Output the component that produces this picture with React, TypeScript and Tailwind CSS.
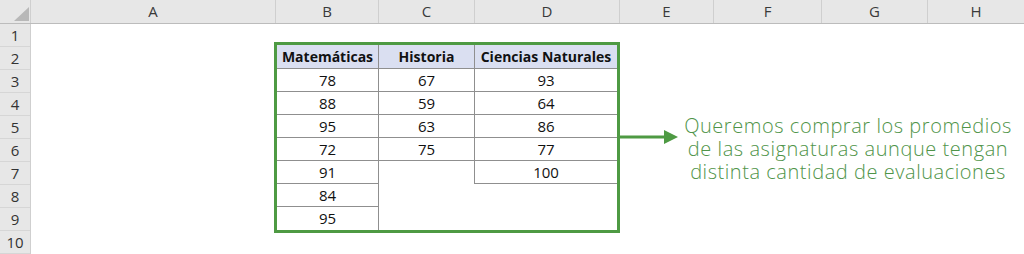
const columns = [
  { label: 'A', w: 'w-[245px]' },
  { label: 'B', w: 'w-[103px]' },
  { label: 'C', w: 'w-[96px]' },
  { label: 'D', w: 'w-[145px]' },
  { label: 'E', w: 'w-[94px]' },
  { label: 'F', w: 'w-[108px]' },
  { label: 'G', w: 'w-[106px]' },
  { label: 'H', w: 'w-[96px]' },
]

type Cell = { v?: string; b?: boolean; r?: boolean }

const rows: Cell[][] = [
  [{ v: '78', b: true, r: true }, { v: '67', b: true, r: true }, { v: '93', b: true }],
  [{ v: '88', b: true, r: true }, { v: '59', b: true, r: true }, { v: '64', b: true }],
  [{ v: '95', b: true, r: true }, { v: '63', b: true, r: true }, { v: '86', b: true }],
  [{ v: '72', b: true, r: true }, { v: '75', b: true, r: true }, { v: '77', b: true }],
  [{ v: '91', b: true, r: true }, { r: true }, { v: '100', b: true }],
  [{ v: '84', b: true, r: true }, {}, {}],
  [{ v: '95', r: true }, {}, {}],
]

const headers = ['Matemáticas', 'Historia', 'Ciencias Naturales']

export default function App() {
  return (
    <div className="w-[1024px] h-[254px] overflow-hidden bg-white font-['Open_Sans',sans-serif]">
      {/* column letters */}
      <div className="flex h-[24px] bg-[#e7e7e7] border-b border-[#bcbcbc]">
        <div className="w-[31px] h-full border-r border-[#cfcfcf] shrink-0">
          <svg width="31" height="23" viewBox="0 0 31 23">
            <polygon points="14,21 29,21 29,7" fill="#b8b8b8" />
          </svg>
        </div>
        {columns.map((c, i) => (
          <div
            key={c.label}
            className={`${c.w} shrink-0 flex items-center justify-center text-[15px] text-[#3a3a3a] ${i < columns.length - 1 ? 'border-r border-[#cfcfcf]' : ''}`}
          >
            {c.label}
          </div>
        ))}
      </div>

      <div className="flex">
        {/* row numbers */}
        <div className="w-[31px] shrink-0 bg-[#e7e7e7] border-r border-[#cfcfcf] flex flex-col">
          {Array.from({ length: 10 }, (_, i) => (
            <div
              key={i}
              className="h-[23px] flex items-center justify-center text-[15px] text-[#333] border-b border-[#d6d6d6]"
            >
              {i + 1}
            </div>
          ))}
        </div>

        {/* sheet area */}
        <div className="flex items-start pt-[18px] pl-[243px]">
          <div className="border-[3px] border-[#4e9a43] w-[346px] grid grid-cols-[102px_96px_142px]">
            {headers.map((h, i) => (
              <div
                key={h}
                className={`h-[24px] bg-[#dadff1] border-b border-[#8f8f8f] flex items-center justify-center text-[14px] font-bold text-[#111] ${i < 2 ? 'border-r' : ''}`}
              >
                {h}
              </div>
            ))}
            {rows.map((row, ri) =>
              row.map((c, ci) => (
                <div
                  key={`${ri}-${ci}`}
                  className={`h-[23px] flex items-center justify-center text-[15px] text-[#111] border-[#8f8f8f] ${c.b ? 'border-b' : ''} ${c.r ? 'border-r' : ''}`}
                >
                  {c.v}
                </div>
              ))
            )}
          </div>

          <div className="flex items-start">
            <svg width="58" height="20" viewBox="0 0 58 20" className="mt-[85px] shrink-0">
              <line x1="0" y1="10" x2="46" y2="10" stroke="#4e9a43" strokeWidth="3" />
              <polygon points="44,3 58,10 44,17" fill="#4e9a43" />
            </svg>
            <div className="w-[340px] mt-[72px] text-center text-[20px] leading-[23px] font-light text-[#4f9449] tracking-[0.55px]">
              Queremos comprar los promedios
              <br />
              de las asignaturas aunque tengan
              <br />
              distinta cantidad de evaluaciones
            </div>
          </div>
        </div>
      </div>
    </div>
  )
}
